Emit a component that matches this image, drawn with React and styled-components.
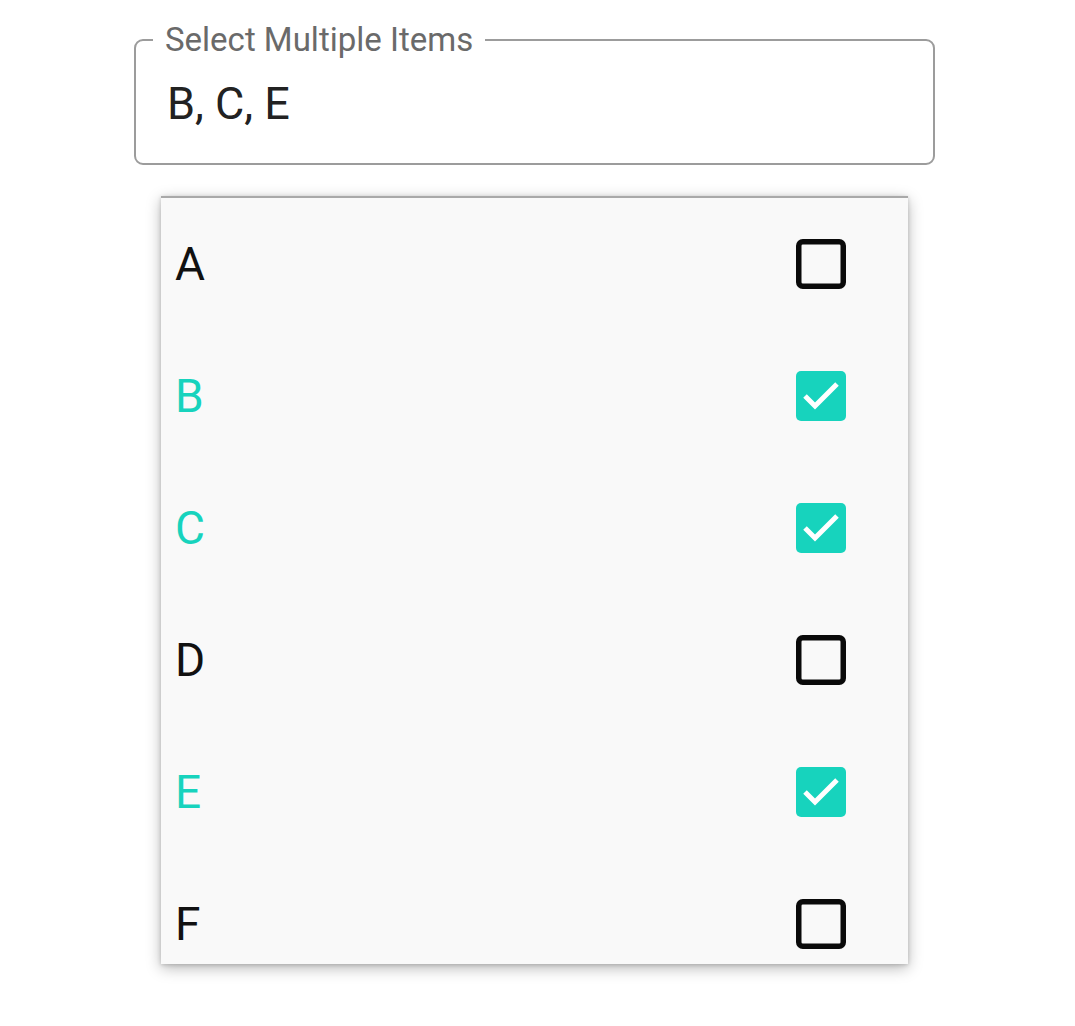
import React, { useState } from "react";
import styled, { createGlobalStyle } from "styled-components";

const GlobalStyle = createGlobalStyle`
  body {
    margin: 0;
    background: #ffffff;
    font-family: Roboto, "Noto Sans", "Liberation Sans", sans-serif;
  }
`;

const TEAL = "#17d3bd";

const Page = styled.div`
  display: flex;
  flex-direction: column;
  align-items: center;
  padding: 23px 6px 50px 0;
`;

const Field = styled.fieldset`
  box-sizing: border-box;
  width: 801px;
  margin: 0;
  padding: 24px 0 37px 31px;
  border: 2px solid #9c9c9c;
  border-radius: 9px;
`;

const Legend = styled.legend`
  margin-left: -14px;
  padding: 0 12px;
  font-size: 33px;
  line-height: 34px;
  color: #6a6a6a;
`;

const Value = styled.div`
  font-size: 45px;
  line-height: 45px;
  color: #222222;
`;

const Menu = styled.div`
  box-sizing: border-box;
  width: 747px;
  height: 768px;
  margin-top: 31px;
  background: #f9f9f9;
  border-top: 2px solid #a9a9a9;
  box-shadow: 0 4px 14px rgba(0, 0, 0, 0.28), 0 1px 4px rgba(0, 0, 0, 0.18);
  overflow: hidden;
`;

const Row = styled.div`
  display: flex;
  align-items: center;
  justify-content: space-between;
  height: 132px;
  padding: 0 62px 0 14px;
  cursor: pointer;
`;

const Letter = styled.span`
  font-size: 46px;
  color: ${p => (p.selected ? TEAL : "#111111")};
`;

const Check = ({ checked }) =>
  checked ? (
    <svg width="50" height="50" viewBox="0 0 50 50">
      <rect x="0" y="0" width="50" height="50" rx="5" fill={TEAL} />
      <polyline
        points="9,25 19,35 41,13"
        fill="none"
        stroke="#ffffff"
        strokeWidth="5"
      />
    </svg>
  ) : (
    <svg width="50" height="50" viewBox="0 0 50 50">
      <rect
        x="2.75"
        y="2.75"
        width="44.5"
        height="44.5"
        rx="4"
        fill="none"
        stroke="#0a0a0a"
        strokeWidth="5.5"
      />
    </svg>
  );

const ITEMS = ["A", "B", "C", "D", "E", "F"];

const App = () => {
  const [selected, setSelected] = useState(["B", "C", "E"]);

  const toggle = item => {
    setSelected(prev =>
      prev.includes(item) ? prev.filter(i => i !== item) : [...prev, item].sort()
    );
  };

  return (
    <Page>
      <GlobalStyle />
      <Field>
        <Legend>Select Multiple Items</Legend>
        <Value>{selected.join(", ")}</Value>
      </Field>
      <Menu>
        {ITEMS.map(item => (
          <Row key={item} onClick={() => toggle(item)}>
            <Letter selected={selected.includes(item)}>{item}</Letter>
            <Check checked={selected.includes(item)} />
          </Row>
        ))}
      </Menu>
    </Page>
  );
};

export default App;
